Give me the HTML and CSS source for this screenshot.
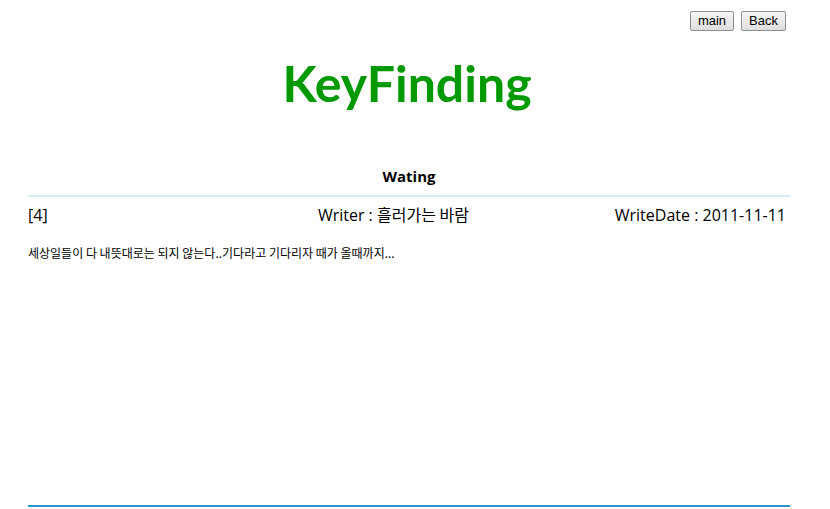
FILE: index.html
```html
<!DOCTYPE html>
<html>
<head>
<meta charset="utf-8">
<link rel="stylesheet" href="styles.css">
</head>
<body>
<div class="page">
  <div class="topbar">
    <button class="btn">main</button>
    <button class="btn">Back</button>
  </div>
  <h1 class="title">KeyFinding</h1>
  <div class="section-title">Wating</div>
  <div class="meta">
    <span class="num">[4]</span>
    <span class="writer">Writer : <span class="ko">흘러가는 바람</span></span>
    <span class="date">WriteDate : 2011-11-11</span>
  </div>
  <div class="content">세상일들이 다 내뜻대로는 되지 않는다..기다라고 기다리자 때가 올때까지...</div>
</div>
</body>
</html>
```
FILE: styles.css
```css
html, body { margin: 0; padding: 0; background: #fff; }
body { font-family: "Open Sans", "Noto Sans CJK KR", sans-serif; color: #000; }
.page { width: 762px; margin-left: 28px; display: flex; flex-direction: column; }
.topbar { display: flex; justify-content: flex-end; gap: 7px; padding-top: 11px; padding-right: 4px; }
.btn { font-family: "Liberation Sans", Arial, sans-serif; font-size: 13px; height: 20px; padding: 0 7px; border: 1px solid #8f8f8f; border-radius: 2px; background: linear-gradient(#f6f6f6, #dedede); color: #000; line-height: 18px; }
.title { margin: 22px 0 0; text-align: center; font-family: Lato, "Open Sans", sans-serif; font-size: 50px; font-weight: 700; color: #009900; line-height: 60px; padding-right: 4px; }
.section-title { margin-top: 53px; text-align: center; font-size: 15px; font-weight: 700; line-height: 20px; padding-bottom: 9px; border-bottom: 2px solid #d4ecf7; }
.meta { display: flex; justify-content: space-between; align-items: center; font-size: 16px; line-height: 22px; margin-top: 6px; padding-right: 4px; }
.num { width: 170px; }
.writer { flex: 1; text-align: center; padding-right: 26px; }
.ko { font-family: "Noto Sans CJK KR", sans-serif; font-size: 16px; }
.date { text-align: right; }
.content { font-family: "Noto Sans CJK KR", sans-serif; font-size: 12px; line-height: 16px; margin-top: 19px; height: 260px; border-bottom: 2px solid #2a96cc; }
```
